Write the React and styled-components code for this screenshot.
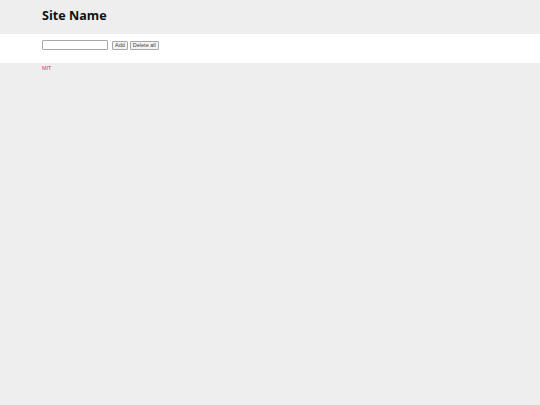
import styled, { createGlobalStyle } from 'styled-components';

const GlobalStyle = createGlobalStyle`
  html, body {
    margin: 0;
    padding: 0;
    background: #eeeeee;
    height: 100%;
  }
  #root {
    min-height: 100%;
  }
`;

const Page = styled.div`
  width: 540px;
  height: 405px;
  background: #eeeeee;
  font-family: "Liberation Sans", Arial, sans-serif;
`;

const Header = styled.header`
  height: 34px;
  box-sizing: border-box;
  padding: 0 42px 1px;
  display: flex;
  align-items: center;
`;

const SiteName = styled.h1`
  margin: 0;
  font-family: "Open Sans", sans-serif;
  font-size: 12.6px;
  font-weight: 700;
  line-height: 1;
  color: #111;
`;

const Main = styled.main`
  height: 29px;
  box-sizing: border-box;
  background: #ffffff;
  padding: 6px 42px 0;
  display: flex;
  align-items: flex-start;
  gap: 2px;
`;

const TextInput = styled.input`
  width: 66px;
  height: 9.5px;
  box-sizing: border-box;
  margin: 0 2px 0 0;
  padding: 0 2px;
  border: 1px solid #a8a8a8;
  border-radius: 1px;
  font-size: 6px;
  background: #fff;
`;

const Button = styled.button`
  height: 9px;
  box-sizing: border-box;
  margin: 0.5px 0 0;
  padding: 0 2px;
  border: 1px solid #a8a8a8;
  border-radius: 1px;
  background: #f2f2f2;
  font-family: "Liberation Sans", Arial, sans-serif;
  font-size: 5.5px;
  line-height: 7px;
  color: #444;
`;

const Footer = styled.footer`
  padding: 2px 42px 0;
  line-height: 6px;
  font-size: 5.5px;
`;

const License = styled.a`
  font-size: 5.5px;
  color: #cc3a62;
  text-decoration: none;
`;

export default function App() {
  return (
    <Page>
      <GlobalStyle />
      <Header>
        <SiteName>Site Name</SiteName>
      </Header>
      <Main>
        <TextInput type="text" />
        <Button>Add</Button>
        <Button>Delete all</Button>
      </Main>
      <Footer>
        <License href="#">MIT</License>
      </Footer>
    </Page>
  );
}
